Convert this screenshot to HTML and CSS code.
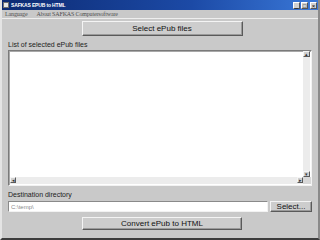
FILE: index.html
```html
<!DOCTYPE html>
<html lang="en">

<head>
    <meta charset="UTF-8">
    <title>SAFKAS EPUB to HTML</title>
    <link rel="stylesheet" href="styles.css">
</head>

<body>
    <div class="window">
        <div class="titlebar">
            <span class="app-icon"></span>
            <span class="title">SAFKAS EPUB to HTML</span>
            <div class="caption-buttons">
                <span class="cap-btn">_</span>
                <span class="cap-btn">&#9633;</span>
                <span class="cap-btn close">&times;</span>
            </div>
        </div>

        <div class="menubar">
            <span class="menu-item">Language</span>
            <span class="menu-item">About SAFKAS Computersoftware</span>
        </div>

        <div class="content">
            <div class="center-row">
                <button class="btn btn-select">Select ePub files</button>
            </div>

            <div class="label">List of selected ePub files</div>

            <div class="listbox">
                <div class="list-main">
                    <div class="list-area"></div>
                    <div class="vscroll">
                        <span class="arrow">&#9652;</span>
                        <span class="track"></span>
                        <span class="arrow">&#9662;</span>
                    </div>
                </div>
                <div class="hscroll">
                    <span class="arrow">&#9666;</span>
                    <span class="track"></span>
                    <span class="arrow">&#9656;</span>
                    <span class="corner"></span>
                </div>
            </div>

            <div class="label label-dest">Destination directory</div>

            <div class="dest-row">
                <input class="dest-input" type="text" value="C:\temp\">
                <button class="btn btn-small">Select...</button>
            </div>

            <div class="center-row bottom">
                <button class="btn btn-convert">Convert ePub to HTML</button>
            </div>
        </div>
    </div>
</body>

</html>
```

FILE: styles.css
```css
* {
    margin: 0;
    padding: 0;
    box-sizing: border-box;
}

body {
    width: 320px;
    height: 240px;
    overflow: hidden;
    font-family: 'Liberation Sans', Arial, sans-serif;
    background: #c8c8c8;
}

.window {
    width: 320px;
    height: 240px;
    display: flex;
    flex-direction: column;
    background: #c9c9c9;
    border-left: 2px solid #e4e4e4;
    border-right: 2px solid #8a8a8a;
    border-bottom: 2px solid #3c3c3c;
}

/* title bar */
.titlebar {
    height: 10px;
    display: flex;
    align-items: center;
    padding-left: 1px;
    background: linear-gradient(90deg, #0c2a72, #1c4aa6 60%, #3a78d8);
    color: #fff;
}

.app-icon {
    width: 6px;
    height: 6px;
    background: #e8e8e8;
    border: 1px solid #707070;
    margin-right: 2px;
}

.title {
    font-size: 5px;
    font-weight: bold;
    letter-spacing: -0.15px;
}

.caption-buttons {
    margin-left: auto;
    display: flex;
    gap: 1px;
    padding-right: 1px;
}

.cap-btn {
    width: 7px;
    height: 7px;
    font-size: 6px;
    line-height: 6px;
    text-align: center;
    color: #000;
    background: #d0d0d0;
    border: 1px solid;
    border-color: #fff #555 #555 #fff;
}

.cap-btn.close {
    margin-left: 1px;
}

/* menu */
.menubar {
    height: 9px;
    display: flex;
    align-items: center;
    gap: 9px;
    padding-left: 3px;
    border-bottom: 1px solid #eeeeee;
    font-family: 'Liberation Serif', 'Times New Roman', serif;
    font-size: 6px;
    letter-spacing: -0.15px;
    color: #505050;
}

/* content */
.content {
    flex: 1;
    display: flex;
    flex-direction: column;
    padding: 2px 4px 8px 6px;
}

.center-row {
    display: flex;
    justify-content: center;
    padding-left: 2px;
}

.btn {
    font-family: 'Liberation Sans', Arial, sans-serif;
    font-size: 8px;
    color: #111;
    background: #cdcdcd;
    border: 1px solid;
    border-color: #f4f4f4 #5a5a5a #5a5a5a #f4f4f4;
    box-shadow: inset -1px -1px #9a9a9a;
}

.btn-select {
    width: 161px;
    height: 15px;
}

.btn-convert {
    width: 160px;
    height: 13px;
}

.label {
    height: 14px;
    font-size: 7px;
    color: #222;
    display: flex;
    align-items: flex-end;
    padding-bottom: 2px;
}

.label-dest {
    height: 15px;
    padding-bottom: 3px;
}

/* list box */
.listbox {
    flex: 1;
    display: flex;
    flex-direction: column;
    background: #fff;
    border: 1px solid;
    border-color: #7a7a7a #f2f2f2 #f2f2f2 #7a7a7a;
    box-shadow: inset 1px 1px #a8a8a8;
    margin-right: 2px;
}

.list-main {
    flex: 1;
    display: flex;
}

.list-area {
    flex: 1;
}

.vscroll {
    width: 7px;
    display: flex;
    flex-direction: column;
    background: #ececec;
    margin-right: 1px;
}

.hscroll {
    height: 7px;
    display: flex;
    background: #ececec;
    margin-bottom: 1px;
    margin-left: 1px;
}

.track {
    flex: 1;
}

.arrow {
    width: 6px;
    height: 6px;
    font-size: 5px;
    line-height: 4px;
    text-align: center;
    color: #333;
    background: #d0d0d0;
    border: 1px solid;
    border-color: #f4f4f4 #5a5a5a #5a5a5a #f4f4f4;
}

.vscroll .arrow {
    width: 7px;
}

.corner {
    width: 8px;
    background: #d8d8d8;
}

/* destination */
.dest-row {
    display: flex;
    height: 11px;
    gap: 2px;
    margin-bottom: 5px;
}

.dest-input {
    width: 260px;
    height: 11px;
    font-family: 'Liberation Sans', Arial, sans-serif;
    font-size: 6px;
    color: #8a8a8a;
    padding-left: 2px;
    background: #fff;
    border: 1px solid;
    border-color: #8a8a8a #f2f2f2 #f2f2f2 #8a8a8a;
    outline: none;
}

.btn-small {
    width: 42px;
    height: 11px;
    font-size: 8px;
    line-height: 8px;
}
```
